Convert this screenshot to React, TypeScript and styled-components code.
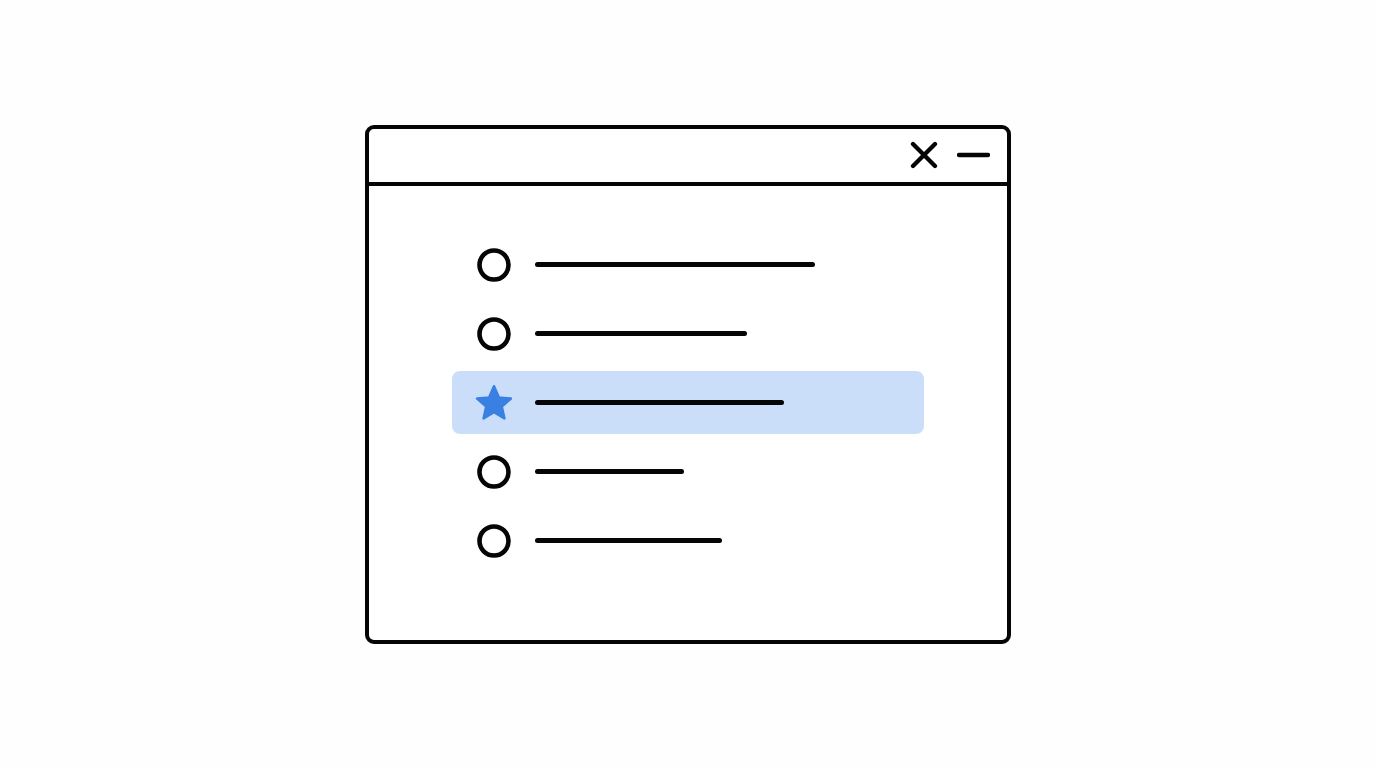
import React from 'react';
import styled, { createGlobalStyle } from 'styled-components';

const GlobalStyle = createGlobalStyle`
  html, body {
    margin: 0;
    padding: 0;
    background: #fefefe;
    font-family: "Liberation Sans", Arial, sans-serif;
  }
  * {
    box-sizing: border-box;
  }
`;

const Page = styled.div`
  width: 100vw;
  height: 100vh;
  display: flex;
  align-items: center;
  justify-content: center;
  background: #fefefe;
`;

const Window = styled.div`
  width: 646px;
  height: 519px;
  border: 4.6px solid #050505;
  border-radius: 9px;
  background: #ffffff;
  display: flex;
  flex-direction: column;
`;

const TitleBar = styled.div`
  height: 57.5px;
  border-bottom: 4.6px solid #050505;
  display: flex;
  align-items: center;
  justify-content: flex-end;
  gap: 19px;
  padding: 0 17px 1px 0;
`;

const Body = styled.div`
  flex: 1;
  display: flex;
  flex-direction: column;
  gap: 6px;
  padding: 47px 83px 0 83px;
`;

const Row = styled.div<{ $active?: boolean }>`
  height: 63px;
  border-radius: 8px;
  display: flex;
  align-items: center;
  gap: 24px;
  padding-left: 25px;
  background: ${p => (p.$active ? '#cadefa' : 'transparent')};
`;

const IconSlot = styled.div`
  width: 34px;
  height: 34px;
  display: flex;
  align-items: center;
  justify-content: center;
  overflow: visible;
`;

const Bar = styled.div<{ $width: number }>`
  width: ${p => p.$width}px;
  height: 4.6px;
  border-radius: 3px;
  background: #050505;
`;

const CloseIcon = () => (
  <svg width="28" height="28" viewBox="0 0 28 28">
    <path d="M3 3 L25 25 M25 3 L3 25" stroke="#050505" strokeWidth="4.3" strokeLinecap="round" fill="none" />
  </svg>
);

const MinimizeIcon = () => (
  <svg width="33" height="6" viewBox="0 0 33 6">
    <path d="M2 3 H31" stroke="#050505" strokeWidth="4.3" strokeLinecap="round" />
  </svg>
);

const RadioIcon = () => (
  <svg width="34" height="34" viewBox="0 0 34 34">
    <circle cx="17" cy="17" r="14.5" stroke="#050505" strokeWidth="4.6" fill="none" />
  </svg>
);

const starPoints = (() => {
  const pts: string[] = [];
  const cx = 20;
  const cy = 21;
  for (let i = 0; i < 10; i++) {
    const r = i % 2 === 0 ? 17.8 : 8.2;
    const a = (Math.PI / 5) * i - Math.PI / 2;
    pts.push(`${(cx + r * Math.cos(a)).toFixed(2)},${(cy + r * Math.sin(a)).toFixed(2)}`);
  }
  return pts.join(' ');
})();

const StarIcon = () => (
  <svg width="40" height="40" viewBox="0 0 40 40" style={{ overflow: 'visible', marginTop: 1 }}>
    <polygon points={starPoints} fill="#3a80e3" stroke="#3a80e3" strokeWidth="2.5" strokeLinejoin="round" />
  </svg>
);

const items = [
  { width: 280, active: false },
  { width: 212, active: false },
  { width: 249, active: true },
  { width: 149, active: false },
  { width: 187, active: false },
];

export default function App() {
  return (
    <>
      <GlobalStyle />
      <Page>
        <Window>
          <TitleBar>
            <CloseIcon />
            <MinimizeIcon />
          </TitleBar>
          <Body>
            {items.map((item, i) => (
              <Row key={i} $active={item.active}>
                <IconSlot>{item.active ? <StarIcon /> : <RadioIcon />}</IconSlot>
                <Bar $width={item.width} />
              </Row>
            ))}
          </Body>
        </Window>
      </Page>
    </>
  );
}
